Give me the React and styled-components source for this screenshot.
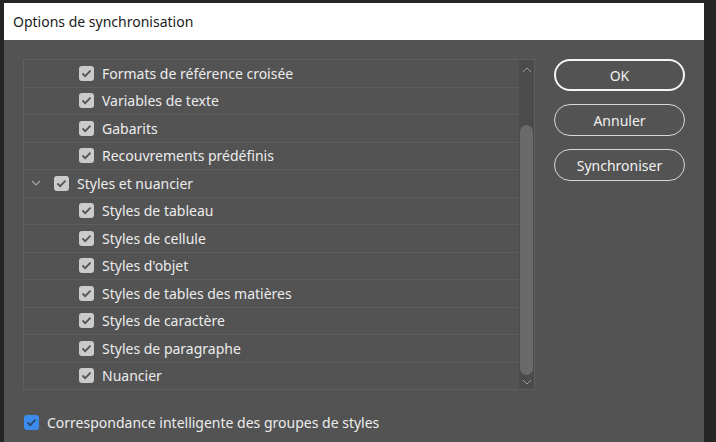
import React from "react";
import styled, { createGlobalStyle } from "styled-components";

const Global = createGlobalStyle`
  html, body { margin: 0; padding: 0; background: #262626; }
  body { font-family: "Noto Sans", "Open Sans", sans-serif; }
`;

const Screen = styled.div`
  width: 716px;
  height: 442px;
  box-sizing: border-box;
  padding: 3px 12px 0 4px;
  background: #252525;
  display: flex;
`;

const Dialog = styled.div`
  flex: 1;
  display: flex;
  flex-direction: column;
  background: #535353;
`;

const TitleBar = styled.div`
  height: 37px;
  background: #ffffff;
  color: #1b1b1b;
  font-size: 14px;
  display: flex;
  align-items: center;
  padding-left: 9px;
  padding-bottom: 1px;
  box-sizing: border-box;
`;

const Body = styled.div`
  flex: 1;
  display: grid;
  grid-template-columns: 512px 131px;
  column-gap: 19px;
  padding: 19px 0 0 19px;
`;

const LeftCol = styled.div`
  display: flex;
  flex-direction: column;
`;

const List = styled.div`
  height: 331px;
  box-sizing: border-box;
  border: 1px solid #5f5f5f;
  display: flex;
`;

const Rows = styled.div`
  flex: 1;
  display: flex;
  flex-direction: column;
`;

const Row = styled.div`
  flex: 1;
  display: flex;
  align-items: center;
  padding-left: ${(p) => p.$indent}px;
  border-top: ${(p) => (p.$first ? "none" : "1px solid #5d5d5d")};
  color: #ececec;
  font-size: 14px;
`;

const Chevron = styled.svg`
  width: 10px;
  height: 6px;
  margin-left: -23px;
  margin-right: 13px;
`;

const Box = styled.span`
  width: 15px;
  height: 15px;
  border-radius: 3px;
  background: ${(p) => (p.$blue ? "#3b8ded" : "#cbcbcb")};
  display: inline-flex;
  align-items: center;
  justify-content: center;
  flex-shrink: 0;
  margin-right: 8px;
`;

const Scrollbar = styled.div`
  width: 15px;
  background: #4b4b4b;
  display: flex;
  flex-direction: column;
  align-items: center;
`;

const ArrowCell = styled.div`
  height: ${(p) => p.$h}px;
  display: flex;
  align-items: center;
  justify-content: center;
`;

const Track = styled.div`
  flex: 1;
`;

const Thumb = styled.div`
  width: 13px;
  height: 250px;
  border-radius: 7px;
  background: #6a6a6a;
`;

const Footer = styled.div`
  display: flex;
  align-items: center;
  margin-top: 23px;
  margin-left: 1px;
  color: #ececec;
  font-size: 14px;
`;

const RightCol = styled.div`
  display: flex;
  flex-direction: column;
  gap: 13px;
`;

const Button = styled.button`
  height: 32px;
  box-sizing: border-box;
  border-radius: 16px;
  background: transparent;
  border: ${(p) => (p.$primary ? "2px solid #f4f4f4" : "1px solid #d8d8d8")};
  color: #f0f0f0;
  font-family: inherit;
  font-size: 14px;
  padding: 0;
  display: flex;
  align-items: center;
  justify-content: center;
`;

const Check = ({ color = "#555555" }) => (
  <svg width="11" height="9" viewBox="0 0 11 9">
    <path d="M1.5 4.5 L4.2 7.2 L9.5 1.6" fill="none" stroke={color} strokeWidth="1.8" />
  </svg>
);

const items = [
  { label: "Formats de référence croisée", level: 1 },
  { label: "Variables de texte", level: 1 },
  { label: "Gabarits", level: 1 },
  { label: "Recouvrements prédéfinis", level: 1 },
  { label: "Styles et nuancier", level: 0, group: true },
  { label: "Styles de tableau", level: 1 },
  { label: "Styles de cellule", level: 1 },
  { label: "Styles d'objet", level: 1 },
  { label: "Styles de tables des matières", level: 1 },
  { label: "Styles de caractère", level: 1 },
  { label: "Styles de paragraphe", level: 1 },
  { label: "Nuancier", level: 1 },
];

export default function App() {
  return (
    <>
      <Global />
      <Screen>
        <Dialog>
          <TitleBar>Options de synchronisation</TitleBar>
          <Body>
            <LeftCol>
              <List>
                <Rows>
                  {items.map((it, i) => (
                    <Row key={it.label} $first={i === 0} $indent={it.level ? 55 : 30}>
                      {it.group && (
                        <Chevron viewBox="0 0 10 6">
                          <path d="M1 1 L5 5 L9 1" fill="none" stroke="#a8a8a8" strokeWidth="1.1" />
                        </Chevron>
                      )}
                      <Box>
                        <Check />
                      </Box>
                      {it.label}
                    </Row>
                  ))}
                </Rows>
                <Scrollbar>
                  <ArrowCell $h={20}>
                    <svg width="10" height="6" viewBox="0 0 10 6">
                      <path d="M1 5 L5 1 L9 5" fill="none" stroke="#9a9a9a" strokeWidth="1" />
                    </svg>
                  </ArrowCell>
                  <Track />
                  <Thumb />
                  <ArrowCell $h={14}>
                    <svg width="10" height="6" viewBox="0 0 10 6">
                      <path d="M1 1 L5 5 L9 1" fill="none" stroke="#9a9a9a" strokeWidth="1" />
                    </svg>
                  </ArrowCell>
                </Scrollbar>
              </List>
              <Footer>
                <Box $blue>
                  <Check color="#2c4a6e" />
                </Box>
                Correspondance intelligente des groupes de styles
              </Footer>
            </LeftCol>
            <RightCol>
              <Button $primary>OK</Button>
              <Button>Annuler</Button>
              <Button>Synchroniser</Button>
            </RightCol>
          </Body>
        </Dialog>
      </Screen>
    </>
  );
}
